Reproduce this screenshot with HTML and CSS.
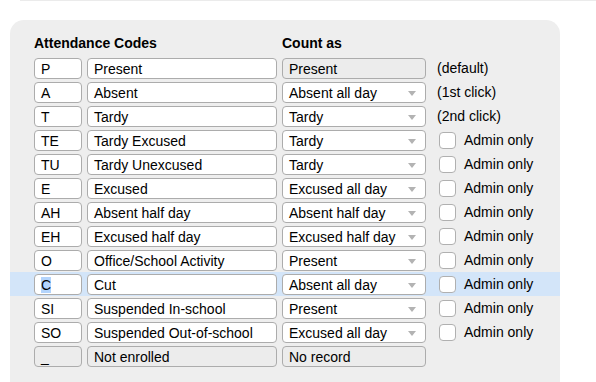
FILE: index.html
```html
<!DOCTYPE html>
<html lang="en">
<head>
  <meta charset="UTF-8">
  <title>Attendance Codes</title>
  <link rel="stylesheet" href="styles.css">
</head>
<body>
  <div class="top-rule"></div>

  <div class="panel">
    <!-- Header -->
    <div class="row head">
      <div class="col-codes">Attendance Codes</div>
      <div class="col-count">Count as</div>
    </div>

    <div class="row">
      <div class="field">P</div>
      <div class="field">Present</div>
      <div class="field off">Present</div>
      <div class="note">(default)</div>
    </div>
    <div class="row">
      <div class="field">A</div>
      <div class="field">Absent</div>
      <div class="field pick">Absent all day</div>
      <div class="note">(1st click)</div>
    </div>
    <div class="row">
      <div class="field">T</div>
      <div class="field">Tardy</div>
      <div class="field pick">Tardy</div>
      <div class="note">(2nd click)</div>
    </div>
    <div class="row">
      <div class="field">TE</div>
      <div class="field">Tardy Excused</div>
      <div class="field pick">Tardy</div>
      <label class="admin"><span class="box"></span>Admin only</label>
    </div>
    <div class="row">
      <div class="field">TU</div>
      <div class="field">Tardy Unexcused</div>
      <div class="field pick">Tardy</div>
      <label class="admin"><span class="box"></span>Admin only</label>
    </div>
    <div class="row">
      <div class="field">E</div>
      <div class="field">Excused</div>
      <div class="field pick">Excused all day</div>
      <label class="admin"><span class="box"></span>Admin only</label>
    </div>
    <div class="row">
      <div class="field">AH</div>
      <div class="field">Absent half day</div>
      <div class="field pick">Absent half day</div>
      <label class="admin"><span class="box"></span>Admin only</label>
    </div>
    <div class="row">
      <div class="field">EH</div>
      <div class="field">Excused half day</div>
      <div class="field pick">Excused half day</div>
      <label class="admin"><span class="box"></span>Admin only</label>
    </div>
    <div class="row">
      <div class="field">O</div>
      <div class="field">Office/School Activity</div>
      <div class="field pick">Present</div>
      <label class="admin"><span class="box"></span>Admin only</label>
    </div>
    <div class="row current">
      <div class="field"><span class="sel">C</span></div>
      <div class="field">Cut</div>
      <div class="field pick">Absent all day</div>
      <label class="admin"><span class="box"></span>Admin only</label>
    </div>
    <div class="row">
      <div class="field">SI</div>
      <div class="field">Suspended In-school</div>
      <div class="field pick">Present</div>
      <label class="admin"><span class="box"></span>Admin only</label>
    </div>
    <div class="row">
      <div class="field">SO</div>
      <div class="field">Suspended Out-of-school</div>
      <div class="field pick">Excused all day</div>
      <label class="admin"><span class="box"></span>Admin only</label>
    </div>
    <div class="row">
      <div class="field off">_</div>
      <div class="field off">Not enrolled</div>
      <div class="field off">No record</div>
    </div>
  </div>
</body>
</html>
```

FILE: styles.css
```css
/* General */
body {
  margin: 0;
  font-family: "Liberation Sans", Arial, sans-serif;
  font-size: 14px;
  color: #000;
  background: #fff;
}

.top-rule {
  height: 1px;
  margin-left: 20px;
  background: #ebebeb;
}

/* Panel */
.panel {
  margin: 19px 0 0 10px;
  width: 550px;
  height: 347px;
  padding-top: 15px;
  background: #eeeeee;
  border-radius: 14px 14px 0 0;
}

/* Rows */
.row {
  display: grid;
  grid-template-columns: 48px 190px 144px auto;
  column-gap: 5px;
  align-items: center;
  height: 24px;
  padding-left: 24px;
}

.row.head {
  height: 17px;
  line-height: 17px;
  margin-bottom: 4px;
  font-weight: bold;
}

.head .col-codes {
  grid-column: 1 / 3;
}

.row.current {
  background: #d3e5f9;
}

/* Fields */
.field {
  position: relative;
  box-sizing: border-box;
  height: 21px;
  padding: 2px 5px 0 6px;
  line-height: 17px;
  background: #fff;
  border: 1px solid #acacac;
  border-radius: 4px;
  white-space: nowrap;
  overflow: hidden;
}

.field.off {
  background: #ececec;
}

.field.pick::after {
  content: "";
  position: absolute;
  right: 9px;
  top: 8px;
  border-left: 4px solid transparent;
  border-right: 4px solid transparent;
  border-top: 5px solid #b3b3b3;
}

.sel {
  background: #b3d4fc;
}

/* Notes and checkboxes */
.note {
  margin-left: 6px;
}

.admin {
  display: flex;
  align-items: center;
  margin-left: 8px;
}

.box {
  box-sizing: border-box;
  width: 17px;
  height: 17px;
  margin-right: 8px;
  background: #fff;
  border: 1px solid #b0b0b0;
  border-radius: 4px;
}
```
